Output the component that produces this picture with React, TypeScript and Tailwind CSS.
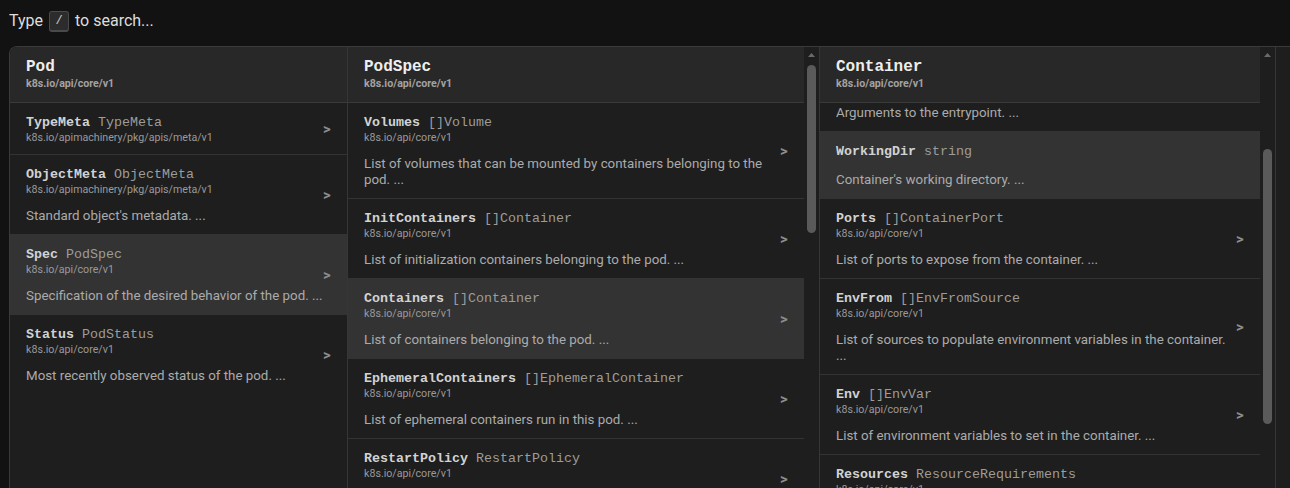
import React, { useLayoutEffect, useRef } from "react";

type Field = { name: string; type: string; pkg?: string; desc?: string };

const CORE = "k8s.io/api/core/v1";
const META = "k8s.io/apimachinery/pkg/apis/meta/v1";

const podFields: Field[] = [
  { name: "TypeMeta", type: "TypeMeta", pkg: META },
  { name: "ObjectMeta", type: "ObjectMeta", pkg: META, desc: "Standard object's metadata. ..." },
  { name: "Spec", type: "PodSpec", pkg: CORE, desc: "Specification of the desired behavior of the pod. ..." },
  { name: "Status", type: "PodStatus", pkg: CORE, desc: "Most recently observed status of the pod. ..." },
];

const podSpecFields: Field[] = [
  { name: "Volumes", type: "[]Volume", pkg: CORE, desc: "List of volumes that can be mounted by containers belonging to the pod. ..." },
  { name: "InitContainers", type: "[]Container", pkg: CORE, desc: "List of initialization containers belonging to the pod. ..." },
  { name: "Containers", type: "[]Container", pkg: CORE, desc: "List of containers belonging to the pod. ..." },
  { name: "EphemeralContainers", type: "[]EphemeralContainer", pkg: CORE, desc: "List of ephemeral containers run in this pod. ..." },
  { name: "RestartPolicy", type: "RestartPolicy", pkg: CORE, desc: "Restart policy for all containers within the pod. ..." },
  { name: "TerminationGracePeriodSeconds", type: "*int64", desc: "Optional duration in seconds the pod needs to terminate gracefully. ..." },
  { name: "ActiveDeadlineSeconds", type: "*int64", desc: "Optional duration in seconds the pod may be active on the node relative to StartTime before the system will actively try to mark it failed and kill associated containers. ..." },
  { name: "DNSPolicy", type: "DNSPolicy", pkg: CORE, desc: "Set DNS policy for the pod. ..." },
  { name: "NodeSelector", type: "map[string]string", desc: "NodeSelector is a selector which must be true for the pod to fit on a node. ..." },
  { name: "ServiceAccountName", type: "string", desc: "ServiceAccountName is the name of the ServiceAccount to use to run this pod. ..." },
  { name: "DeprecatedServiceAccount", type: "string", desc: "DeprecatedServiceAccount is a deprecated alias for ServiceAccountName. ..." },
  { name: "AutomountServiceAccountToken", type: "*bool", desc: "AutomountServiceAccountToken indicates whether a service account token should be automatically mounted. ..." },
  { name: "NodeName", type: "string", desc: "NodeName indicates in which node this pod is scheduled. ..." },
  { name: "HostNetwork", type: "bool", desc: "Host networking requested for this pod. ..." },
  { name: "HostPID", type: "bool", desc: "Use the host's pid namespace. ..." },
  { name: "HostIPC", type: "bool", desc: "Use the host's ipc namespace. ..." },
  { name: "ShareProcessNamespace", type: "*bool", desc: "Share a single process namespace between all of the containers in a pod. ..." },
  { name: "SecurityContext", type: "*PodSecurityContext", pkg: CORE, desc: "SecurityContext holds pod-level security attributes and common container settings. ..." },
  { name: "ImagePullSecrets", type: "[]LocalObjectReference", pkg: CORE, desc: "ImagePullSecrets is an optional list of references to secrets in the same namespace to use for pulling any of the images used by this PodSpec. ..." },
  { name: "Hostname", type: "string", desc: "Specifies the hostname of the Pod If not specified, the pod's hostname will be set to a system-defined value. ..." },
  { name: "Subdomain", type: "string", desc: "If specified, the fully qualified Pod hostname will be \"<hostname>.<subdomain>.<pod namespace>.svc.<cluster domain>\". ..." },
  { name: "Affinity", type: "*Affinity", pkg: CORE, desc: "If specified, the pod's scheduling constraints ..." },
  { name: "SchedulerName", type: "string", desc: "If specified, the pod will be dispatched by specified scheduler. ..." },
  { name: "Tolerations", type: "[]Toleration", pkg: CORE, desc: "If specified, the pod's tolerations. ..." },
  { name: "HostAliases", type: "[]HostAlias", pkg: CORE, desc: "HostAliases is an optional list of hosts and IPs that will be injected into the pod's hosts file if specified. ..." },
  { name: "PriorityClassName", type: "string", desc: "If specified, indicates the pod's priority. ..." },
  { name: "Priority", type: "*int32", desc: "The priority value. ..." },
  { name: "DNSConfig", type: "*PodDNSConfig", pkg: CORE, desc: "Specifies the DNS parameters of a pod. ..." },
  { name: "ReadinessGates", type: "[]PodReadinessGate", pkg: CORE, desc: "If specified, all readiness gates will be evaluated for pod readiness. ..." },
  { name: "RuntimeClassName", type: "*string", desc: "RuntimeClassName refers to a RuntimeClass object in the node.k8s.io group, which should be used to run this pod. ..." },
  { name: "EnableServiceLinks", type: "*bool", desc: "EnableServiceLinks indicates whether information about services should be injected into pod's environment variables. ..." },
  { name: "PreemptionPolicy", type: "*PreemptionPolicy", pkg: CORE, desc: "PreemptionPolicy is the Policy for preempting pods with lower priority. ..." },
  { name: "Overhead", type: "ResourceList", pkg: CORE, desc: "Overhead represents the resource overhead associated with running a pod for a given RuntimeClass. ..." },
  { name: "TopologySpreadConstraints", type: "[]TopologySpreadConstraint", pkg: CORE, desc: "TopologySpreadConstraints describes how a group of pods ought to spread across topology domains. ..." },
  { name: "SetHostnameAsFQDN", type: "*bool", desc: "If true the pod's hostname will be configured as the pod's FQDN, rather than the leaf name (the default). ..." },
  { name: "OS", type: "*PodOS", pkg: CORE, desc: "Specifies the OS of the containers in the pod. ..." },
  { name: "HostUsers", type: "*bool", desc: "Use the host's user namespace. ..." },
  { name: "SchedulingGates", type: "[]PodSchedulingGate", pkg: CORE, desc: "SchedulingGates is an opaque list of values that if specified will block scheduling the pod. ..." },
  { name: "ResourceClaims", type: "[]PodResourceClaim", pkg: CORE, desc: "ResourceClaims defines which ResourceClaims must be allocated and reserved before the Pod is allowed to start. ..." },
];

const containerFields: Field[] = [
  { name: "Name", type: "string", desc: "Name of the container specified as a DNS_LABEL. ..." },
  { name: "Image", type: "string", desc: "Container image name. ..." },
  { name: "Command", type: "[]string", desc: "Entrypoint array. ..." },
  { name: "Args", type: "[]string", desc: "Arguments to the entrypoint. ..." },
  { name: "WorkingDir", type: "string", desc: "Container's working directory. ..." },
  { name: "Ports", type: "[]ContainerPort", pkg: CORE, desc: "List of ports to expose from the container. ..." },
  { name: "EnvFrom", type: "[]EnvFromSource", pkg: CORE, desc: "List of sources to populate environment variables in the container. ..." },
  { name: "Env", type: "[]EnvVar", pkg: CORE, desc: "List of environment variables to set in the container. ..." },
  { name: "Resources", type: "ResourceRequirements", pkg: CORE, desc: "Compute Resources required by this container. ..." },
  { name: "ResizePolicy", type: "[]ContainerResizePolicy", pkg: CORE, desc: "Resources resize policy for the container. ..." },
  { name: "RestartPolicy", type: "*ContainerRestartPolicy", pkg: CORE, desc: "RestartPolicy defines the restart behavior of individual containers in a pod. ..." },
  { name: "VolumeMounts", type: "[]VolumeMount", pkg: CORE, desc: "Pod volumes to mount into the container's filesystem. ..." },
  { name: "VolumeDevices", type: "[]VolumeDevice", pkg: CORE, desc: "volumeDevices is the list of block devices to be used by the container. ..." },
  { name: "LivenessProbe", type: "*Probe", pkg: CORE, desc: "Periodic probe of container liveness. ..." },
  { name: "ReadinessProbe", type: "*Probe", pkg: CORE, desc: "Periodic probe of container service readiness. ..." },
  { name: "StartupProbe", type: "*Probe", pkg: CORE, desc: "StartupProbe indicates that the Pod has successfully initialized. ..." },
  { name: "Lifecycle", type: "*Lifecycle", pkg: CORE, desc: "Actions that the management system should take in response to container lifecycle events. ..." },
  { name: "TerminationMessagePath", type: "string", desc: "Optional: Path at which the file to which the container's termination message will be written is mounted into the container's filesystem. ..." },
  { name: "TerminationMessagePolicy", type: "TerminationMessagePolicy", pkg: CORE, desc: "Indicate how the termination message should be populated. ..." },
  { name: "ImagePullPolicy", type: "PullPolicy", pkg: CORE, desc: "Image pull policy. ..." },
  { name: "SecurityContext", type: "*SecurityContext", pkg: CORE, desc: "SecurityContext defines the security options the container should be run with. ..." },
  { name: "Stdin", type: "bool", desc: "Whether this container should allocate a buffer for stdin in the container runtime. ..." },
  { name: "StdinOnce", type: "bool", desc: "Whether the container runtime should close the stdin channel after it has been opened by a single attach. ..." },
  { name: "TTY", type: "bool", desc: "Whether this container should allocate a TTY for itself, also requires 'stdin' to be true. ..." },
];

function FieldRow({ field, active, rowRef }: { field: Field; active?: boolean; rowRef?: React.Ref<HTMLDivElement> }) {
  return (
    <div
      ref={rowRef}
      className={`flex items-center border-b border-[#333] pt-[11px] pb-[10px] pl-4 pr-4 last:border-b-0 ${
        active ? "bg-[#333333]" : ""
      }`}
    >
      <div className="min-w-0 flex-1">
        <div className="font-['Liberation_Mono',monospace] text-[13.33px] leading-[17px] whitespace-nowrap">
          <span className="font-bold text-[#d2d2d2]">{field.name}</span>{" "}
          <span className="text-[#9c9c9c]">{field.type}</span>
        </div>
        {field.pkg && (
          <div className="text-[10.67px] leading-[13px] text-[#9a9a9a]">{field.pkg}</div>
        )}
        {field.desc && (
          <div className="mt-3 text-[13.33px] leading-4 text-[#ababab]">{field.desc}</div>
        )}
      </div>
      {field.pkg && (
        <span className="w-2 shrink-0 text-[15px] font-bold leading-none text-[#8c8c8c]">&gt;</span>
      )}
    </div>
  );
}

function ScrollRail({ thumb }: { thumb: string }) {
  return (
    <div className="flex w-[15px] shrink-0 flex-col items-center bg-[#1e1e1e]">
      <svg className="mt-[6px] shrink-0" width="7" height="4" viewBox="0 0 7 4">
        <path d="M0 4 L3.5 0 L7 4 Z" fill="#6a6a6a" />
      </svg>
      <div className={`w-[9px] shrink-0 rounded-full bg-[#5a5a5a] ${thumb}`} />
    </div>
  );
}

function Column({
  title,
  pkg,
  fields,
  active,
  width,
  thumb,
  scrollRef,
  activeRef,
}: {
  title: string;
  pkg: string;
  fields: Field[];
  active?: string;
  width: string;
  thumb?: string;
  scrollRef?: React.Ref<HTMLDivElement>;
  activeRef?: React.Ref<HTMLDivElement>;
}) {
  return (
    <div className="flex h-full shrink-0 border-r border-[#363636] bg-[#1e1e1e]">
      <div ref={scrollRef} className={`${width} h-full overflow-hidden`}>
        <div className="sticky top-0 z-10 border-b border-[#3a3a3a] bg-[#282828] px-4 pt-[10px] pb-3">
          <div className="font-['Liberation_Mono',monospace] text-base font-bold leading-5 text-[#eeeeee]">
            {title}
          </div>
          <div className="text-[10.67px] font-bold leading-[13px] text-[#a3a3a3]">{pkg}</div>
        </div>
        {fields.map((f) => (
          <FieldRow
            key={f.name}
            field={f}
            active={f.name === active}
            rowRef={f.name === active ? activeRef : undefined}
          />
        ))}
      </div>
      {thumb && <ScrollRail thumb={thumb} />}
    </div>
  );
}

export default function App() {
  const colRef = useRef<HTMLDivElement>(null);
  const rowRef = useRef<HTMLDivElement>(null);

  // keep the Container column scrolled so WorkingDir sits just under its header
  useLayoutEffect(() => {
    const col = colRef.current;
    const row = rowRef.current;
    if (!col || !row) return;
    const top = row.getBoundingClientRect().top - col.getBoundingClientRect().top + col.scrollTop;
    col.scrollTop = top - 85;
  }, []);

  return (
    <div className="h-screen overflow-hidden bg-[#121212] font-['Roboto',sans-serif] text-[#dddddd]">
      <div className="flex h-[42px] items-center px-[9px] text-base">
        <span>Type</span>
        <kbd className="mx-[6px] flex h-[21px] w-5 items-center justify-center rounded-[3px] border border-b-2 border-[#4a4a4a] bg-[#2c2c2c] font-['Liberation_Mono',monospace] text-[12px] text-[#cccccc]">
          /
        </kbd>
        <span>to search...</span>
      </div>
      <div className="ml-[9px] mt-1 flex h-[770px] overflow-hidden rounded-tl-lg border-l border-t border-[#3a3a3a] bg-[#1e1e1e]">
        <Column title="Pod" pkg={CORE} fields={podFields} active="Spec" width="w-[337px]" />
        <Column
          title="PodSpec"
          pkg={CORE}
          fields={podSpecFields}
          active="Containers"
          width="w-[456px]"
          thumb="mt-[8px] h-[168px]"
        />
        <Column
          title="Container"
          pkg={CORE}
          fields={containerFields}
          active="WorkingDir"
          width="w-[440px]"
          thumb="mt-[92px] h-[275px]"
          scrollRef={colRef}
          activeRef={rowRef}
        />
      </div>
    </div>
  );
}
